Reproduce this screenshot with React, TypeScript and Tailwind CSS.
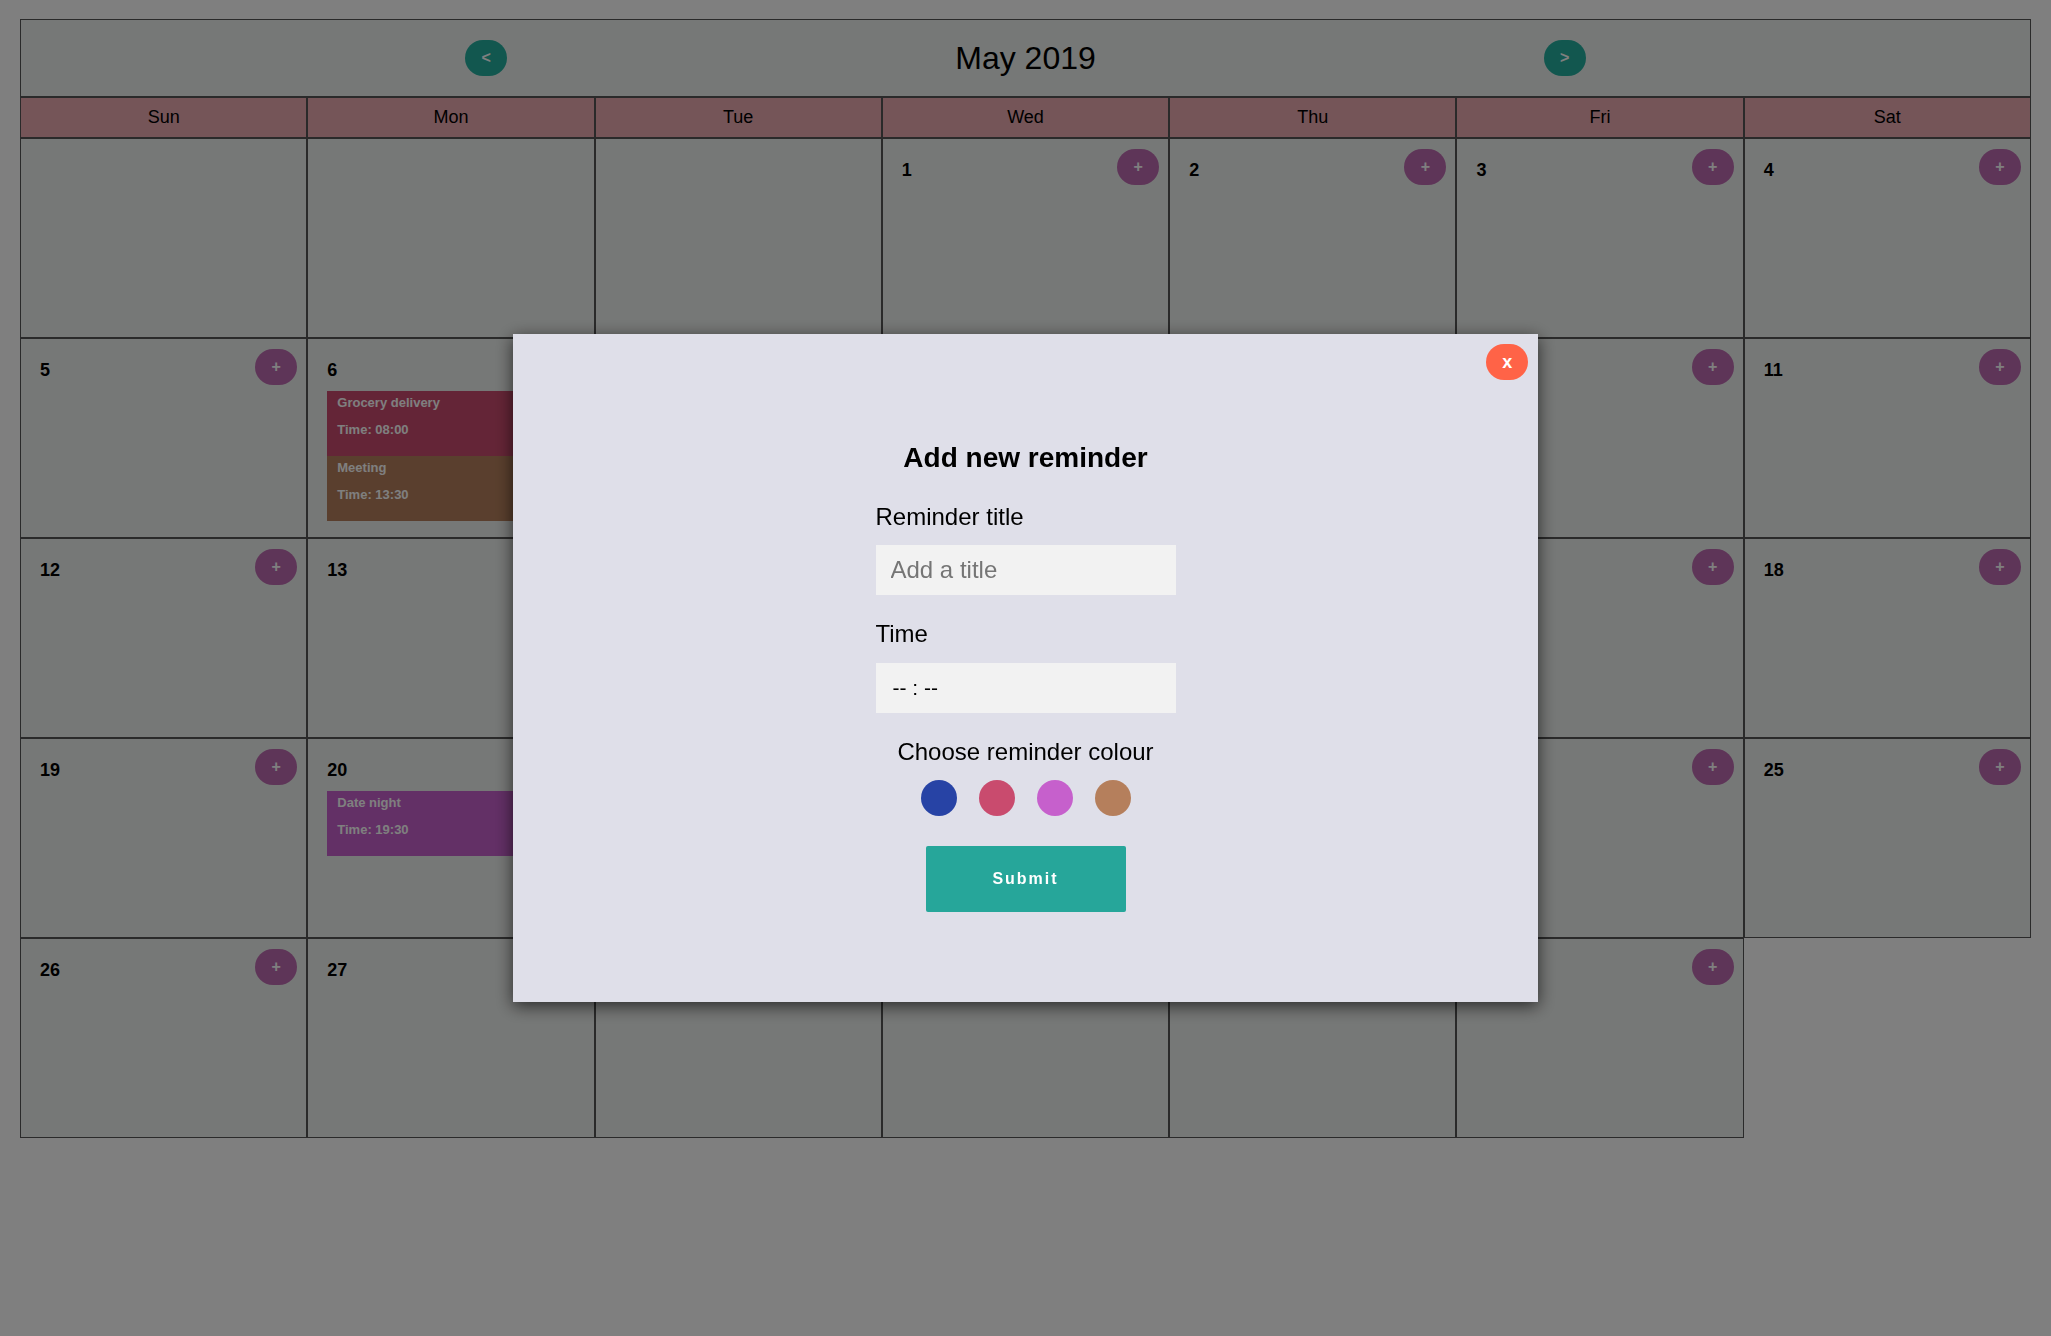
import React from "react";

interface Reminder {
  title: string;
  time: string;
  colour: string;
}

const reminders: Record<number, Reminder[]> = {
  6: [
    { title: "Grocery delivery", time: "08:00", colour: "#c94b6e" },
    { title: "Meeting", time: "13:30", colour: "#b57f5c" },
  ],
  20: [{ title: "Date night", time: "19:30", colour: "#c660cc" }],
};

const weekDays = ["Sun", "Mon", "Tue", "Wed", "Thu", "Fri", "Sat"];
const swatches = ["#2743a5", "#c94b6e", "#c660cc", "#b57f5c"];

const cells: (number | null)[] = [null, null, null];
for (let d = 1; d <= 31; d++) cells.push(d);

function DayCell({ day }: { day: number | null }) {
  if (day === null) {
    return <div className="h-[200px] border border-[#555] bg-[#edf0ee]" />;
  }
  return (
    <div className="h-[200px] border border-[#555] bg-[#edf0ee] pt-[10px] pr-[9px] pl-[19px]">
      <div className="flex items-start justify-between">
        <span className="mt-[8px] text-[18px] font-bold text-black">{day}</span>
        <button className="w-[42px] h-[36px] rounded-full bg-[#bc6ab0] text-white text-[16px] font-bold leading-none">
          +
        </button>
      </div>
      {reminders[day] && (
        <div className="mt-[6px] mr-[10px] flex flex-col">
          {reminders[day].map((r, i) => (
            <div
              key={i}
              className="h-[65px] px-[10px] text-white text-[13px] font-bold"
              style={{ backgroundColor: r.colour }}
            >
              <p className="leading-[24px]">{r.title}</p>
              <p className="mt-[3px] leading-[24px]">Time: {r.time}</p>
            </div>
          ))}
        </div>
      )}
    </div>
  );
}

export default function App() {
  return (
    <div className="min-h-screen bg-white font-['Liberation_Sans',Arial,sans-serif]">
      <div className="mx-5 mt-[19px]">
        <div className="h-[78px] border border-[#555] bg-[#edf0ee] flex items-center justify-center gap-[448px]">
          <button className="w-[42px] h-[36px] rounded-full bg-[#24ae9e] text-white text-[16px] font-bold leading-none">
            &lt;
          </button>
          <h1 className="text-[32px] text-black leading-none">May 2019</h1>
          <button className="w-[42px] h-[36px] rounded-full bg-[#24ae9e] text-white text-[16px] font-bold leading-none">
            &gt;
          </button>
        </div>
        <div className="grid grid-cols-7">
          {weekDays.map((d) => (
            <div
              key={d}
              className="h-[41px] border border-[#555] bg-[#eaaab0] flex items-center justify-center text-[18px] text-black"
            >
              {d}
            </div>
          ))}
          {cells.map((day, i) => (
            <DayCell key={i} day={day} />
          ))}
        </div>
      </div>

      <div className="fixed inset-0 z-10 bg-black/50 flex items-center justify-center">
        <div className="relative w-1/2 h-1/2 bg-[#dfdfe9] shadow-[0_4px_16px_rgba(0,0,0,0.65)] flex flex-col items-center pt-[108px]">
          <button className="absolute top-[10px] right-[10px] w-[42px] h-[36px] rounded-full bg-[#ff6347] text-white text-[18px] font-bold leading-none">
            x
          </button>
          <div className="w-[300px] flex flex-col">
            <h2 className="text-[28px] font-bold leading-[32px] text-center text-black">
              Add new reminder
            </h2>
            <label className="mt-[29px] text-[24px] leading-[28px] text-black">Reminder title</label>
            <input
              type="text"
              placeholder="Add a title"
              className="mt-[14px] h-[50px] w-full bg-[#f2f2f2] pl-[15px] text-[24px] outline-none placeholder:text-[#757575]"
            />
            <label className="mt-[25px] text-[24px] leading-[28px] text-black">Time</label>
            <div className="mt-[15px] h-[50px] w-full bg-[#f2f2f2] pl-[17px] flex items-center text-[21px] text-black">
              -- : --
            </div>
            <p className="mt-[25px] text-[24px] leading-[28px] text-center text-black">
              Choose reminder colour
            </p>
            <div className="mt-[14px] flex justify-center gap-[22px]">
              {swatches.map((c) => (
                <span
                  key={c}
                  className="w-[36px] h-[36px] rounded-full"
                  style={{ backgroundColor: c }}
                />
              ))}
            </div>
            <button className="mt-[30px] mx-auto w-[200px] h-[66px] rounded-[2px] bg-[#26a69a] text-white text-[16px] font-bold tracking-[2px]">
              Submit
            </button>
          </div>
        </div>
      </div>
    </div>
  );
}
